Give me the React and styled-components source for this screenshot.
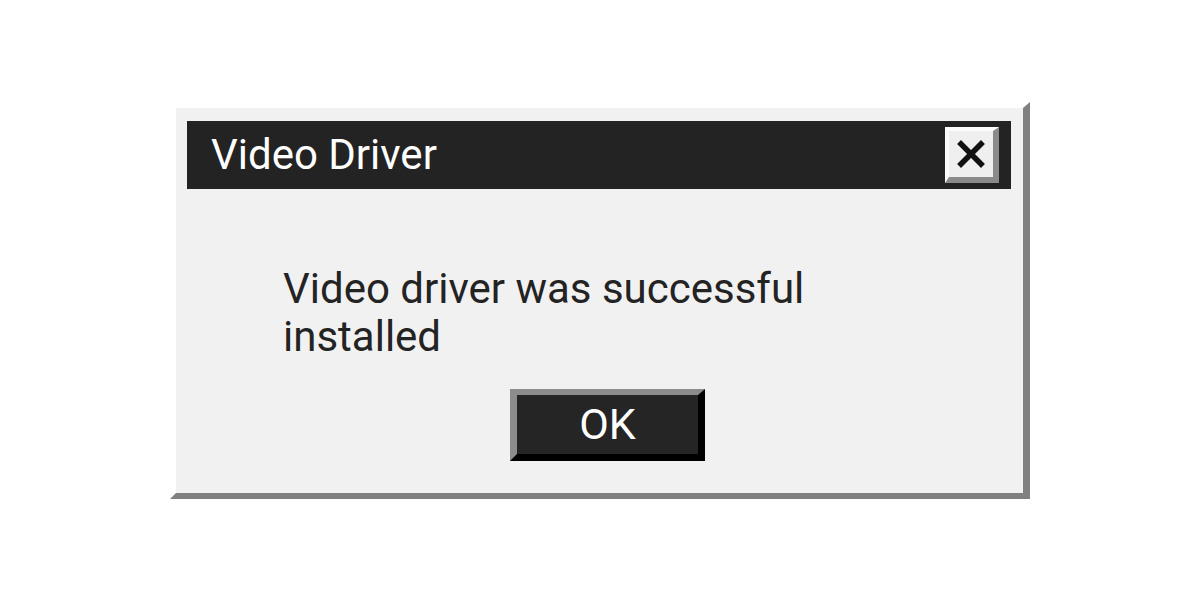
import React from "react";
import styled, { createGlobalStyle } from "styled-components";

const Global = createGlobalStyle`
  html, body {
    margin: 0;
    padding: 0;
    background: #ffffff;
  }
  body {
    font-family: Roboto, "Liberation Sans", Arial, sans-serif;
  }
`;

const Page = styled.div`
  width: 1200px;
  height: 600px;
  display: flex;
  align-items: center;
  justify-content: center;
`;

/* Window with a hard drop shadow drawn as its right/bottom border;
   transparent top/left borders give the shadow its slanted ends. */
const Window = styled.div`
  width: 860px;
  box-sizing: border-box;
  border-style: solid;
  border-width: 6px 7px 6px 6px;
  border-color: transparent #808080 #808080 transparent;
  background: #f1f1f1;
  background-clip: padding-box;
  padding: 13px 12px 32px 11px;
  display: flex;
  flex-direction: column;
`;

const TitleBar = styled.div`
  height: 68px;
  background: #232323;
  display: flex;
  align-items: center;
  justify-content: space-between;
  padding: 0 12px 0 24px;
  box-sizing: border-box;
`;

const Title = styled.span`
  color: #ffffff;
  font-size: 42px;
  line-height: 1;
`;

const CloseButton = styled.button`
  width: 54px;
  height: 56px;
  box-sizing: border-box;
  border-style: solid;
  border-width: 4px 6px 6px 4px;
  border-color: #fbfbfb #8a8a8a #8a8a8a #fbfbfb;
  background: #efefef;
  padding: 0;
  display: flex;
  align-items: center;
  justify-content: center;
  cursor: pointer;
`;

const Body = styled.div`
  display: flex;
  flex-direction: column;
  align-items: flex-start;
`;

const Message = styled.p`
  margin: 76px 0 0 96px;
  font-size: 42px;
  line-height: 48px;
  color: #232323;
`;

const OkButton = styled.button`
  margin: 28px 0 0 323px;
  width: 195px;
  height: 72px;
  box-sizing: border-box;
  border-style: solid;
  border-width: 6px 7px 7px 7px;
  border-color: #8c8c8c #000000 #000000 #8c8c8c;
  background: #252525;
  color: #ffffff;
  font-family: Roboto, "Liberation Sans", Arial, sans-serif;
  font-size: 43px;
  line-height: 1;
  padding: 0;
  cursor: pointer;
`;

function CloseIcon() {
  return (
    <svg width="28" height="28" viewBox="0 0 28 28" aria-hidden="true">
      <path
        d="M4 4 L24 24 M24 4 L4 24"
        stroke="#111111"
        strokeWidth="5.5"
        strokeLinecap="square"
        fill="none"
      />
    </svg>
  );
}

export default function App() {
  return (
    <Page>
      <Global />
      <Window>
        <TitleBar>
          <Title>Video Driver</Title>
          <CloseButton aria-label="Close">
            <CloseIcon />
          </CloseButton>
        </TitleBar>
        <Body>
          <Message>
            Video driver was successful
            <br />
            installed
          </Message>
          <OkButton>OK</OkButton>
        </Body>
      </Window>
    </Page>
  );
}
